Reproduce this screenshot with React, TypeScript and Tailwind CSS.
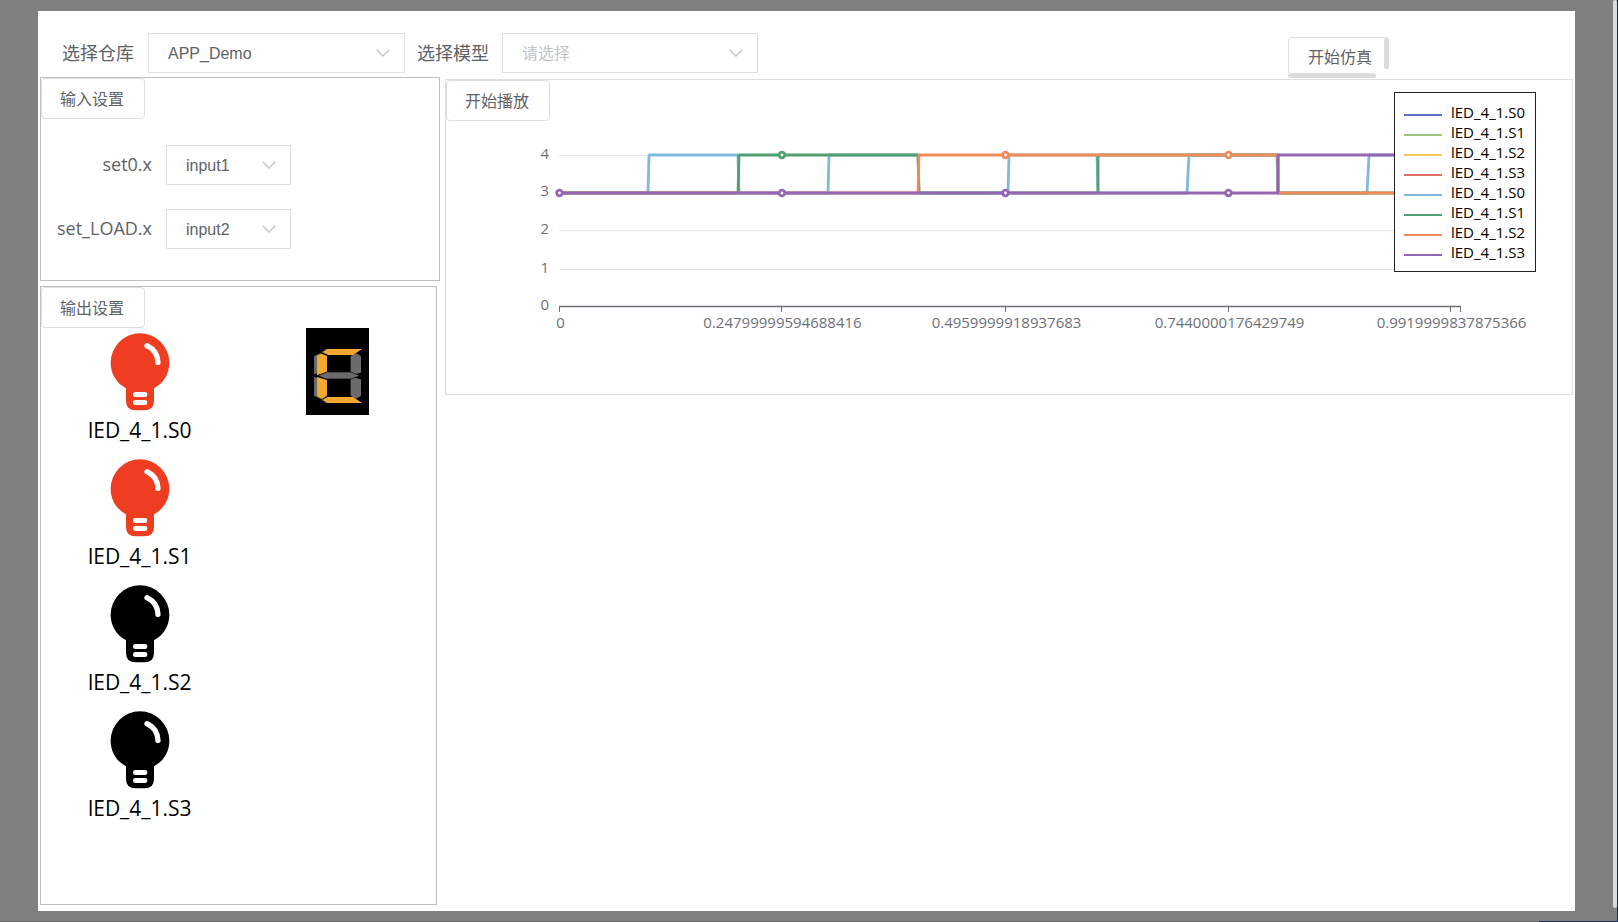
import React, { useId, useState } from "react";

const UI_FONT = "font-['Open_Sans','Noto_Sans_CJK_SC',sans-serif]";

function Chevron() {
  return (
    <svg
      className="pointer-events-none absolute top-4 right-[15px] h-2 w-[14px]"
      viewBox="0 0 14 8"
      fill="none"
      stroke="#c0c4cc"
      strokeWidth="1.3"
      aria-hidden="true"
    >
      <path d="M0.7 0.7 L7 7 L13.3 0.7" />
    </svg>
  );
}

type SelectProps = {
  id: string;
  options: string[];
  placeholder?: string;
  className: string;
};

function Select({ id, options, placeholder, className }: SelectProps) {
  const [value, setValue] = useState(placeholder ? "" : options[0]);
  return (
    <div className={`relative h-10 ${className}`}>
      <select
        id={id}
        value={value}
        onChange={(e) => setValue(e.target.value)}
        className={`h-10 w-full appearance-none border border-[#dcdfe6] bg-white pt-0.5 pr-8 pl-[19px] font-['Liberation_Sans','Noto_Sans_CJK_SC',sans-serif] text-base ${
          value ? "text-[#606266]" : "text-[#c0c4cc]"
        }`}
      >
        {placeholder && <option value="">{placeholder}</option>}
        {options.map((o) => (
          <option key={o}>{o}</option>
        ))}
      </select>
      <Chevron />
    </div>
  );
}

function PanelButton({ children }: { children: React.ReactNode }) {
  return (
    <button
      type="button"
      className="block h-[41px] w-[104px] rounded border border-[#dcdfe6] bg-white pr-0.5 text-center text-base text-[#606266]"
    >
      {children}
    </button>
  );
}

function InputRow({ label, value }: { label: string; value: string }) {
  const id = useId();
  return (
    <div className="flex items-start gap-[14px]">
      <label htmlFor={id} className="w-[111px] text-right text-lg leading-[38px] text-[#606266]">
        {label}
      </label>
      <Select id={id} options={[value]} className="w-[125px]" />
    </div>
  );
}

function Bulb({ label, on }: { label: string; on: boolean }) {
  return (
    <li className="flex flex-col items-center gap-1 pt-[5px] pb-[9px]">
      <svg className="h-[78px] w-[60px]" viewBox="0 0 180 234" aria-hidden="true">
        <path
          fill={on ? "#ee3d20" : "#000"}
          d="M90 1 A88 88 0 0 1 178 89 C178 124 159 151 132 166 V203 Q132 232 103 232 H77 Q48 232 48 203 V166 C21 151 2 124 2 89 A88 88 0 0 1 90 1 Z"
        />
        <path d="M111 38 Q143 54 144 88" fill="none" stroke="#fff" strokeWidth="16" strokeLinecap="round" />
        <rect x="69" y="177" width="43" height="15" rx="7" fill="#fff" />
        <rect x="69" y="201" width="43" height="15" rx="7" fill="#fff" />
      </svg>
      <span className="text-[21px] leading-[30px] text-black">{label}</span>
    </li>
  );
}

function SevenSegment() {
  return (
    <svg className="h-[87px] w-[63px]" viewBox="0 0 189 261" role="img" aria-label="C">
      <rect width="189" height="261" fill="#000" />
      <g fill="#6b6b6b">
        <path d="M24 85 L45 74 V132 L24 139 Z" />
        <path d="M24 146 L45 154 V214 L24 203 Z" />
        <path d="M46 73 L60 63 H80 L58 78 Z" />
        <path d="M46 215 L60 225 H80 L58 210 Z" />
        <path d="M134 84 L150 76 L165 84 V134 L134 142 Z" />
        <path d="M134 147 L165 154 V203 L150 212 L134 203 Z" />
      </g>
      <g fill="#f5a830">
        <path d="M52 73 L64 63 H168 L141 81 H66 Z" />
        <path d="M52 215 L64 207 H141 L168 225 H64 Z" />
        <path d="M33 84 L47 77 L63 84 V132 L33 142 Z" />
        <path d="M33 147 L63 156 V203 L48 213 L33 203 Z" />
      </g>
      <path
        d="M35 143 L63 132 H134 L163 143 L134 153 H60 Z"
        fill="#6b6b6b"
        stroke="#000"
        strokeWidth="2"
      />
    </svg>
  );
}

const LEGEND = [
  { name: "lED_4_1.S0", color: "bg-[#5871c3]" },
  { name: "lED_4_1.S1", color: "bg-[#98c77c]" },
  { name: "lED_4_1.S2", color: "bg-[#f2c964]" },
  { name: "lED_4_1.S3", color: "bg-[#df6e69]" },
  { name: "lED_4_1.S0", color: "bg-[#7fbadb]" },
  { name: "lED_4_1.S1", color: "bg-[#539f74]" },
  { name: "lED_4_1.S2", color: "bg-[#f08c5a]" },
  { name: "lED_4_1.S3", color: "bg-[#9566b4]" },
];

const X_TICKS = [
  { x: 559.5, label: "0" },
  { x: 781.5, label: "0.24799999594688416" },
  { x: 1005.5, label: "0.4959999918937683" },
  { x: 1228.5, label: "0.7440000176429749" },
  { x: 1450.5, label: "0.9919999837875366" },
];

const Y_TICKS = [
  { y: 306.5, label: "0" },
  { y: 269.5, label: "1" },
  { y: 230.5, label: "2" },
  { y: 193, label: "3" },
  { y: 155.5, label: "4" },
];

const SERIES = [
  {
    color: "#7fbadb",
    d: "M559 193 H648 L649 155 H738 L739 193 H828 L829 155 H918 L919 193 H1008 L1009 155 H1097 L1098 193 H1187 L1189 155 H1277 L1278 193 H1367 L1369 155 H1460",
  },
  { color: "#539f74", d: "M559 193 H738 L739 155 H918 L919 193 H1098 V155 H1278 V193 H1460" },
  { color: "#f08c5a", d: "M559 193 H918 L919 155 H1278 V193 H1460" },
  { color: "#9566b4", d: "M559 193 H1278 V155 H1460" },
];

const MARKERS = [
  { x: 559.5, y: 193, color: "#9566b4" },
  { x: 782, y: 193, color: "#9566b4" },
  { x: 1005.5, y: 193, color: "#9566b4" },
  { x: 1228.5, y: 193, color: "#9566b4" },
  { x: 782, y: 155, color: "#539f74" },
  { x: 1005.5, y: 155, color: "#f08c5a" },
  { x: 1228.5, y: 155, color: "#f08c5a" },
];

function Chart() {
  return (
    <svg className="block w-full" viewBox="446 121 1126 273" role="img" aria-label="lED_4_1">
      {Y_TICKS.slice(1).map((t) => (
        <path key={t.label} d={`M559 ${t.y} H1460`} stroke="#e0e6f1" />
      ))}
      {SERIES.map((s) => (
        <path key={s.color} d={s.d} fill="none" stroke={s.color} strokeWidth="2.8" strokeLinejoin="bevel" />
      ))}
      {MARKERS.map((m) => (
        <circle key={`${m.x}-${m.y}`} cx={m.x} cy={m.y} r="2.8" fill="#fff" stroke={m.color} strokeWidth="2.8" />
      ))}
      <path d="M559 306.5 H1461" stroke="#6e7079" strokeWidth="1.3" />
      {[...X_TICKS.map((t) => t.x), 1460.5].map((x) => (
        <path key={x} d={`M${x} 306 V312`} stroke="#6e7079" />
      ))}
      <g fill="#6e7079" fontSize="15">
        {Y_TICKS.map((t) => (
          <text key={t.label} x="549" y={Math.round(t.y) + 3} textAnchor="end">
            {t.label}
          </text>
        ))}
        {X_TICKS.map((t) => (
          <text key={t.label} x={t.x + 1} y="328" textAnchor="middle">
            {t.label}
          </text>
        ))}
      </g>
    </svg>
  );
}

function Legend() {
  return (
    <ul className="absolute top-3 right-9 w-[142px] border border-[#222] bg-white py-[9px] pl-[9px]">
      {LEGEND.map((item, i) => (
        <li key={i} className="flex h-5 items-center gap-[9px] text-[15px] leading-5 text-black">
          <span className={`mt-[5px] h-0.5 w-[38px] ${item.color}`} />
          {item.name}
        </li>
      ))}
    </ul>
  );
}

export default function App() {
  return (
    <div className={`flex min-h-screen flex-col bg-[#808080] ${UI_FONT}`}>
      <div className="flex flex-1">
        <main className="mt-[11px] mr-[38px] mb-[10px] ml-[38px] flex min-w-0 flex-1 flex-col bg-white">
          <header className="flex h-[66px] items-start pt-[22px] pl-6">
            <label htmlFor="repo" className="mr-[14px] text-lg leading-10 text-[#606266]">
              选择仓库
            </label>
            <Select id="repo" options={["APP_Demo"]} className="mr-3 w-[257px]" />
            <label htmlFor="model" className="mr-[13px] text-lg leading-10 text-[#606266]">
              选择模型
            </label>
            <Select id="model" options={[]} placeholder="请选择" className="w-[256px]" />
            <div className="mt-1 mr-[186px] ml-auto grid grid-cols-[96px_5px] grid-rows-[36px_5px]">
              <button
                type="button"
                className="rounded-tl border-t border-l border-[#dcdfe6] pt-0.5 pl-[7px] text-center text-base text-[#606266]"
              >
                开始仿真
              </button>
              <span className="h-8 rounded-full bg-[#dcdcdc]" />
              <span className="w-[88px] rounded-full bg-[#dcdcdc]" />
            </div>
          </header>

          <div className="flex flex-1 px-0.5 pb-[6px]">
            <div className="mr-[5px] flex w-[400px] flex-col gap-[5px]">
              <section className="border border-[#bfbfbf] pb-[31px]">
                <PanelButton>输入设置</PanelButton>
                <div className="mt-[26px] flex flex-col gap-6">
                  <InputRow label="set0.x" value="input1" />
                  <InputRow label="set_LOAD.x" value="input2" />
                </div>
              </section>
              <section className="mr-[3px] flex-1 border border-[#bfbfbf]">
                <PanelButton>输出设置</PanelButton>
                <div className="grid grid-cols-2">
                  <ul>
                    <Bulb label="lED_4_1.S0" on />
                    <Bulb label="lED_4_1.S1" on />
                    <Bulb label="lED_4_1.S2" on={false} />
                    <Bulb label="lED_4_1.S3" on={false} />
                  </ul>
                  <div className="flex items-start justify-center">
                    <SevenSegment />
                  </div>
                </div>
              </section>
            </div>

            <section className="relative mt-0.5 min-w-0 flex-1 self-start border border-[#dfdfdf]">
              <PanelButton>开始播放</PanelButton>
              <Chart />
              <Legend />
            </section>
          </div>
        </main>
        <div className="mb-[13px] w-1 rounded-sm bg-[#dcdadb]" />
        <div className="w-px bg-[#1c2c54]" />
      </div>
      <div className="flex h-px bg-[#686868]">
        <div className="ml-auto w-[79px] bg-[#1c2c54]" />
      </div>
    </div>
  );
}
